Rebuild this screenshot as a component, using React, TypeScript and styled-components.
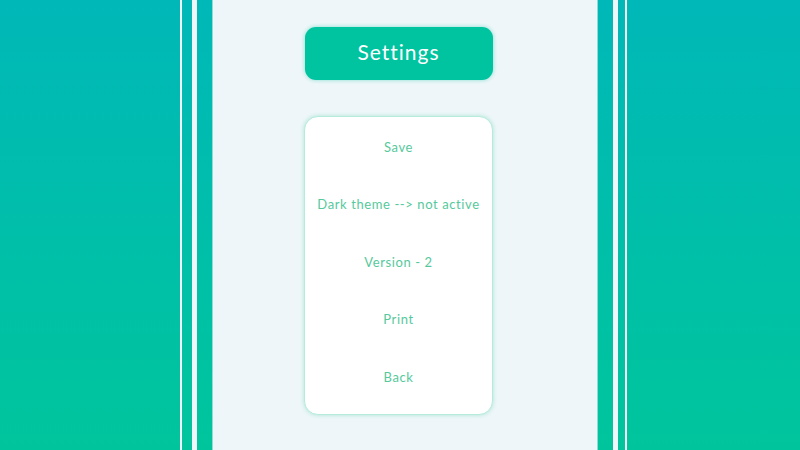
import React from "react";
import styled, { createGlobalStyle } from "styled-components";

const Global = createGlobalStyle`
  html, body { margin: 0; padding: 0; }
  body {
    width: 800px;
    height: 450px;
    overflow: hidden;
    background: linear-gradient(180deg, #00b8b8 0%, #00c59c 100%);
    font-family: Lato, "Open Sans", sans-serif;
  }
`;

const Frame = styled.div`
  display: flex;
  height: 450px;
  padding-left: 180px;
`;

const Line = styled.div<{ $w: number }>`
  width: ${(p) => p.$w}px;
  flex: none;
  background: #eef7f9;
  box-shadow: 0 0 1px rgba(120, 150, 160, 0.6);
`;

const Gap = styled.div<{ $w: number }>`
  width: ${(p) => p.$w}px;
  flex: none;
`;

const Panel = styled.div`
  width: 386px;
  flex: none;
  box-sizing: border-box;
  background: #eef6f9;
  border-left: 1px solid #8fdcd6;
  border-right: 1px solid #8fdcd6;
  display: flex;
  flex-direction: column;
  align-items: center;
  padding: 27px 13px 0 0;
`;

const Title = styled.div`
  width: 188px;
  height: 53px;
  box-sizing: border-box;
  border-radius: 11px;
  background: #00c3a0;
  box-shadow: 0 0 4px rgba(0, 196, 160, 0.45);
  color: #ffffff;
  font-size: 21px;
  font-weight: 400;
  letter-spacing: 1px;
  display: flex;
  align-items: center;
  justify-content: center;
  padding-bottom: 4px;
`;

const Card = styled.div`
  margin-top: 36px;
  width: 189px;
  height: 299px;
  box-sizing: border-box;
  background: #ffffff;
  border: 1px solid #b6ebdb;
  border-radius: 14px;
  box-shadow: 0 0 4px rgba(90, 210, 170, 0.45);
  display: grid;
  grid-template-rows: repeat(5, 57.5px);
  padding-top: 1px;
`;

const Item = styled.div`
  display: flex;
  align-items: center;
  justify-content: center;
  color: #56c99c;
  font-size: 13px;
  font-weight: 400;
  letter-spacing: 0.6px;
  white-space: nowrap;
`;

const items = ["Save", "Dark theme --> not active", "Version - 2", "Print", "Back"];

export default function App() {
  return (
    <>
      <Global />
      <Frame>
        <Line $w={2} />
        <Gap $w={10} />
        <Line $w={5} />
        <Gap $w={15} />
        <Panel>
          <Title>Settings</Title>
          <Card>
            {items.map((t) => (
              <Item key={t}>{t}</Item>
            ))}
          </Card>
        </Panel>
        <Gap $w={15} />
        <Line $w={5} />
        <Gap $w={7} />
        <Line $w={2} />
      </Frame>
    </>
  );
}
